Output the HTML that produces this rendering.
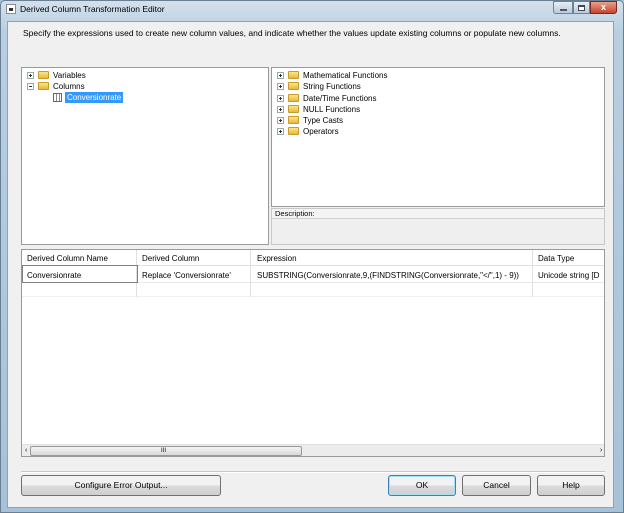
<!DOCTYPE html>
<html><head><style>
*{margin:0;padding:0;box-sizing:border-box}
body{width:624px;height:513px;overflow:hidden;background:#a9c3da;font-family:"Liberation Sans",sans-serif;font-size:8px;color:#000;position:relative}
.a{position:absolute}
.frame{left:0;top:0;width:624px;height:513px;background:linear-gradient(#d3e1ec,#b9cfe1 30px,#a7c1d8);border:1px solid #6b7f93;border-radius:5px 5px 0 0}
.client{left:7px;top:21px;width:607px;height:487px;background:#f0f0f0;border:1px solid #8da2b5}
.panel{background:#fff;border:1px solid #9a9a9a}
.t{position:absolute;white-space:nowrap;line-height:11px}
.pl{position:absolute;width:7px;height:7px;border:1px solid #9aa;background:#fff}
.pl:before{content:"";position:absolute;left:1px;top:2px;width:3px;height:1px;background:#333}
.pl.p:after{content:"";position:absolute;left:2px;top:1px;width:1px;height:3px;background:#333}
.fd{position:absolute;width:11px;height:8px;background:linear-gradient(#fbe58a,#e8b83c);border:1px solid #c89a2a;border-radius:1px}
.btn{position:absolute;height:21px;border:1px solid #707070;border-radius:3px;background:linear-gradient(#f2f2f2 50%,#dcdcdc 50%,#cfcfcf);text-align:center;line-height:19px;font-size:8.5px}
.cell{position:absolute;border-right:1px solid #e0e0e0;height:100%}
</style></head><body>
<div class="a frame"></div>
<div class="a" style="left:6px;top:4px;width:10px;height:10px;background:#fff;border:1px solid #889"><div style="position:absolute;left:2px;top:3px;width:4px;height:3px;background:#333"></div></div>
<div class="t" style="left:20px;top:4px;font-size:8.5px">Derived Column Transformation Editor</div>
<div class="a" style="left:553px;top:1px;width:20px;height:13px;background:linear-gradient(#e6eef5,#b8cbdb);border:1px solid #6e8296;border-radius:0 0 0 3px"><div style="position:absolute;left:6px;top:7px;width:7px;height:2px;background:#fff;border:1px solid #556"></div></div>
<div class="a" style="left:573px;top:1px;width:17px;height:13px;background:linear-gradient(#e6eef5,#b8cbdb);border:1px solid #6e8296"><div style="position:absolute;left:4px;top:3px;width:7px;height:6px;border:1px solid #445;border-top-width:2px;background:#fff"></div></div>
<div class="a" style="left:590px;top:1px;width:27px;height:13px;background:linear-gradient(#e8a08c,#c8442c);border:1px solid #7a2a1c;border-radius:0 0 3px 0;color:#fff;text-align:center;font-size:9px;font-weight:bold;line-height:11px">x</div>
<div class="a client"></div>
<div class="t" style="left:23px;top:28px;font-size:8.5px">Specify the expressions used to create new column values, and indicate whether the values update existing columns or populate new columns.</div>

<div class="a panel" style="left:21px;top:67px;width:248px;height:178px">
<div class="pl p" style="left:5px;top:4px"></div><div class="fd" style="left:16px;top:3px"></div><div class="t" style="left:31px;top:2px">Variables</div>
<div class="pl" style="left:5px;top:15px"></div><div class="fd" style="left:16px;top:14px"></div><div class="t" style="left:31px;top:13px">Columns</div>
<div class="a" style="left:31px;top:25px;width:9px;height:9px;border:1px solid #667;background:repeating-linear-gradient(90deg,#fff 0 2px,#889 2px 3px)"></div>
<div class="t" style="left:43px;top:24px;background:#3399ff;color:#fff;padding:0 2px;height:11px">Conversionrate</div>
</div>

<div class="a panel" style="left:271px;top:67px;width:334px;height:140px">
<div class="pl p" style="left:5px;top:4px"></div><div class="fd" style="left:16px;top:3px"></div><div class="t" style="left:31px;top:2px">Mathematical Functions</div>
<div class="pl p" style="left:5px;top:15px"></div><div class="fd" style="left:16px;top:14px"></div><div class="t" style="left:31px;top:13px">String Functions</div>
<div class="pl p" style="left:5px;top:27px"></div><div class="fd" style="left:16px;top:26px"></div><div class="t" style="left:31px;top:25px">Date/Time Functions</div>
<div class="pl p" style="left:5px;top:38px"></div><div class="fd" style="left:16px;top:37px"></div><div class="t" style="left:31px;top:36px">NULL Functions</div>
<div class="pl p" style="left:5px;top:49px"></div><div class="fd" style="left:16px;top:48px"></div><div class="t" style="left:31px;top:47px">Type Casts</div>
<div class="pl p" style="left:5px;top:60px"></div><div class="fd" style="left:16px;top:59px"></div><div class="t" style="left:31px;top:58px">Operators</div>
</div>
<div class="a" style="left:271px;top:208px;width:334px;height:37px;border:1px solid #c8c8c8;background:#efefef">
<div style="height:10px;border-bottom:1px solid #d0d0d0;background:#f4f4f4"></div>
<div class="t" style="left:3px;top:0;font-size:7.5px;line-height:10px">Description:</div></div>

<div class="a panel" style="left:21px;top:249px;width:584px;height:208px;overflow:hidden">
<div class="a" style="left:0;top:0;width:584px;height:16px;border-bottom:1px solid #e0e0e0"></div>
<div class="a" style="left:0;top:16px;width:584px;height:17px;border-bottom:1px solid #e8e8e8"></div>
<div class="a" style="left:0;top:33px;width:584px;height:14px;border-bottom:1px solid #f0f0f0"></div>
<div class="a" style="left:0;top:0;height:47px"><div class="cell" style="left:0;width:115px"></div><div class="cell" style="left:115px;width:114px"></div><div class="cell" style="left:229px;width:282px"></div></div>
<div class="a" style="left:0;top:15px;width:116px;height:18px;border:1px solid #808080"></div>
<div class="t" style="left:5px;top:3px">Derived Column Name</div><div class="t" style="left:120px;top:3px">Derived Column</div><div class="t" style="left:235px;top:3px">Expression</div><div class="t" style="left:516px;top:3px">Data Type</div>
<div class="t" style="left:5px;top:20px">Conversionrate</div><div class="t" style="left:120px;top:20px">Replace 'Conversionrate'</div><div class="t" style="left:235px;top:20px">SUBSTRING(Conversionrate,9,(FINDSTRING(Conversionrate,"&lt;/",1) - 9))</div><div class="t" style="left:516px;top:20px">Unicode string [D</div>
<div class="a" style="left:0;top:194px;width:584px;height:13px;background:#ececec;border-top:1px solid #e0e0e0">
<div class="t" style="left:3px;top:0;font-size:7px">‹</div>
<div class="a" style="left:8px;top:1px;width:272px;height:10px;border:1px solid #999;border-radius:2px;background:linear-gradient(#f4f4f4,#d8d8d8)"><div class="t" style="left:130px;top:-1px;font-size:6px">III</div></div>
<div class="t" style="left:578px;top:0;font-size:7px">›</div></div>
</div>

<div class="a" style="left:21px;top:471px;width:584px;height:2px;border-top:1px solid #c8c8c8;border-bottom:1px solid #fff"></div>
<div class="btn" style="left:21px;top:475px;width:200px">Configure Error Output...</div>
<div class="btn" style="left:388px;top:475px;width:68px;border-color:#3c7fb1;box-shadow:inset 0 0 0 1px #a6e0f5">OK</div>
<div class="btn" style="left:462px;top:475px;width:69px">Cancel</div>
<div class="btn" style="left:537px;top:475px;width:68px">Help</div>
</body></html>
